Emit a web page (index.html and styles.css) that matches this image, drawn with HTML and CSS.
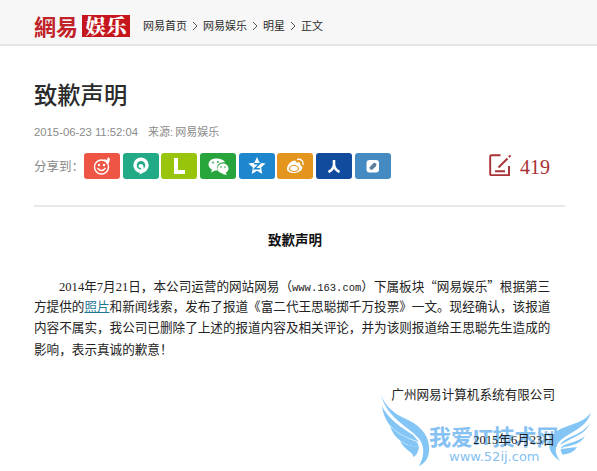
FILE: index.html
```html
<!DOCTYPE html>
<html lang="zh-CN">
<head>
<meta charset="utf-8">
<title>致歉声明</title>
<link rel="stylesheet" href="styles.css">
</head>
<body>
<header class="top">
  <div class="logo"><span class="logo-name">網易</span><span class="logo-channel">娱乐</span></div>
  <nav class="crumbs">
    <span>网易首页</span><svg viewBox="0 0 6 10"><path d="M1 1l4 4-4 4"/></svg><span>网易娱乐</span><svg viewBox="0 0 6 10"><path d="M1 1l4 4-4 4"/></svg><span>明星</span><svg viewBox="0 0 6 10"><path d="M1 1l4 4-4 4"/></svg><span>正文</span>
  </nav>
</header>
<main class="page">
  <h1>致歉声明</h1>
  <div class="meta"><span class="time">2015-06-23 11:52:04</span><span>来源:&thinsp;网易娱乐</span></div>
  <div class="share">
    <span class="share-label">分享到：</span>
    <div class="buttons">
      <a class="btn red"><svg viewBox="0 0 36 26"><circle cx="17.500" cy="14" r="7" class="line"/><circle cx="15" cy="12" r="1.200"/><circle cx="20" cy="12" r="1.200"/><path class="line" d="M13.500 15q4 5 8 0"/><path d="M20 6l3 1 1-3 2 2-1 4-2 1z"/></svg></a>
      <a class="btn teal"><svg viewBox="0 0 36 26"><circle class="ring" cx="18" cy="12.300" r="6"/><path d="M15.500 12.500q2-2.500 4.500-.5 2 4-1 8.500l-3 1q3-3 2-6.500-2.500 0-2.500-2.500z"/></svg></a>
      <a class="btn lime"><svg viewBox="0 0 36 26"><path d="M13 5h4v12h7v4H13z"/></svg></a>
      <a class="btn green"><svg viewBox="0 0 36 26"><path d="M16 5.500c-9 0-9 9-4 11l-1 3 4-2h3c-3-6 3-9 7-8-1-3-5-4-9-4z"/><ellipse cx="23" cy="15.500" rx="5.500" ry="5"/><path d="M25 19l2 3-5-1z"/><g class="green-hole"><circle cx="13" cy="9.500" r=".9"/><circle cx="18" cy="9" r=".9"/><circle cx="21" cy="14" r=".8"/><circle cx="25" cy="14" r=".8"/></g></svg></a>
      <a class="btn blue"><svg viewBox="0 0 36 26"><path d="M18 4l2.600 5.700 6 .7-4.500 4.200 1.200 6.400-5.300-3.200-5.300 3.200 1.200-6.400-4.500-4.200 6-.7z"/><path class="zmark" d="M15 10.700h5.500l-5 5h5.500"/></svg></a>
      <a class="btn orange"><svg viewBox="0 0 36 26"><path d="M10 15c1-5 7-9 9-7 1 1 0 2 0 2 4-2 5 0 4 2 2 1 3 2 2 4-2 5-16 6-15-1z"/><ellipse cx="17" cy="15.500" rx="4.500" ry="3" class="eye"/><circle cx="16.500" cy="16" r="1"/><path class="line" d="M20 6.500c4-1 7 2 6 5.500"/></svg></a>
      <a class="btn navy"><svg viewBox="0 0 36 26"><path class="ren" d="M18 7v5q-1 5-5.500 7M18 12q1 5 5.500 7"/></svg></a>
      <a class="btn steel"><svg viewBox="0 0 36 26"><rect x="11.500" y="7" width="12.500" height="12.500" rx="3"/><path class="pen" d="M16.500 14.800l3-3"/></svg></a>
    </div>
    <a class="comments"><svg viewBox="0 0 22 22"><path d="M11.500 1.200H2.500Q1.200 1.200 1.200 2.500V20q0 1.200 1.300 1.200H20V12"/><path d="M9.500 13.500l9-9M6 17.300h10"/><path class="tip" d="M19.800 3l1.700-1.700"/></svg><span class="count">419</span></a>
  </div>
  <article class="story">
    <h2>致歉声明</h2>
    <div class="lines">
      <p class="first"><i>2014</i>年<i>7</i>月<i>21</i>日，本公司运营的网站网易（<i class="url">www.163.com</i>）下属板块“网易娱乐”根据第三</p>
      <p>方提供的<a class="link">照片</a>和新闻线索，发布了报道《富二代王思聪掷千万投票》一文。现经确认，该报道</p>
      <p>内容不属实，我公司已删除了上述的报道内容及相关评论，并为该则报道给王思聪先生造成的</p>
      <p>影响，表示真诚的歉意！</p>
    </div>
    <footer class="sign">
      <p>广州网易计算机系统有限公司</p>
      <p><i>2015</i>年<i>6</i>月<i>23</i>日</p>
    </footer>
  </article>
</main>
<div class="watermark">
  <svg class="wings" viewBox="0 0 217 76">
    <path d="M1-1C4 10 13 18 24 23C38 29 48 38 49 51C50 61 46 68 39 71C44 62 45 53 40 45C33 34 6 24 1-1Z"/>
    <path d="M2 11C8 24 22 33 33 40L39 47C26 42 5 36 2 11Z"/>
    <path d="M10 31C17 39 27 43 37 47L39 52C25 51 14 44 10 31Z"/>
    <path d="M20 46C26 50 32 51 39 52C38 58 36 61 33 62C34 57 26 57 20 46Z"/>
    <path d="M211 17C208 29 198 34 188 40C176 47 172 54 180 66C169 59 166 49 173 40C183 28 203 31 211 17Z"/>
    <path d="M210 28C206 39 195 41 180 50C185 41 202 41 210 28Z"/>
    <path d="M205 41C200 50 192 50 180 53C187 47 197 48 205 41Z"/>
    <path d="M197 52C193 59 187 58 183 60Q180 56 181 54Z"/>
  </svg>
  <div class="mark-name">我爱IT技术网</div>
  <div class="mark-url">www.52ij.com</div>
</div>
</body>
</html>
```

FILE: styles.css
```css
* { box-sizing: border-box; }
body {
  margin: 0;
  width: 597px;
  height: 471px;
  position: relative;
  overflow: hidden;
  background: #fff;
  color: #2b2b2b;
  font-family: "Liberation Sans", "Noto Sans CJK SC", sans-serif;
}
h1, h2, p { margin: 0; }
i { font-style: normal; }
.top {
  height: 46px;
  padding: 8px 0 0 34px;
  display: flex;
  align-items: center;
  background: #f7f7f7;
  border-bottom: 2px solid #e6e6e6;
}
.logo { display: flex; align-items: center; width: 109px; color: #c02227; }
.logo-name {
  width: 48px;
  height: 23px;
  font: 700 22px/20px "Noto Sans CJK TC", sans-serif;
  white-space: nowrap;
}
.logo-channel {
  width: 48px;
  height: 22px;
  background: #c4161c;
  color: #fff;
  font: 900 20.500px/21px "Noto Serif CJK SC", "Noto Sans CJK SC", serif;
  text-align: center;
  white-space: nowrap;
}
.crumbs { display: flex; align-items: center; font-size: 11px; line-height: 16px; }
.crumbs svg { width: 6px; height: 10px; margin: 0 5px; fill: none; stroke: #555; }
.page { position: relative; z-index: 1; padding: 33px 32px 0 34px; }
h1 { font-size: 23.300px; line-height: 34px; font-weight: 500; }
.meta {
  display: flex;
  gap: 10px;
  margin-top: 11px;
  font-size: 11px;
  line-height: 16px;
  color: #8a8a8a;
}
.time { font-size: 11.300px; }
.share {
  display: flex;
  height: 54px;
  margin-top: 13px;
  border-bottom: 2px solid #e8e8e8;
}
.share-label { width: 50px; font-size: 12.500px; line-height: 29px; color: #888; white-space: nowrap; }
.buttons { display: flex; gap: 2.700px; }
.btn { width: 36px; height: 26px; border-radius: 3px; }
.btn svg { display: block; width: 36px; height: 26px; fill: #fff; }
.btn .line, .btn .ring, .btn .ren { fill: none; stroke: #fff; stroke-width: 1.400; }
.btn .ring { stroke-width: 3.400; }
.btn .ren { stroke-width: 2.600; }
.btn .zmark { fill: none; stroke: #1e86cc; stroke-width: 1.500; }
.btn .eye { fill: none; stroke: #e3951d; stroke-width: 1.200; }
.btn .pen { stroke: #5b7f9c; stroke-width: 3.800; stroke-linecap: round; }
.green-hole { fill: #27a43b; }
.red { background: #ef5545; }
.teal { background: #22a985; }
.lime { background: #98c50c; }
.green { background: #27a43b; }
.blue { background: #1e86cc; }
.orange { background: #e3951d; }
.navy { background: #114b9d; }
.steel { background: #448bc4; }
.comments { display: flex; margin-left: auto; margin-right: 15px; color: #a83236; }
.comments svg { width: 22px; height: 22px; margin-top: 1px; fill: none; stroke: currentColor; stroke-width: 1.900; }
.count { margin-left: 9px; font: 20px/29px "Liberation Serif", serif; }
.story { padding-top: 24px; font-size: 12.600px; color: #222; }
h2 { font-size: 13.500px; line-height: 20px; text-align: center; color: #111; padding-right: 9px; }
.lines { width: 517px; margin-top: 24px; }
.lines p { height: 21.700px; line-height: 21.700px; white-space: nowrap; }
.lines .first { padding-left: 25px; font-family: "Noto Sans CJK SC", sans-serif; }
.story i { font: 12.600px/12px "Liberation Serif", serif; }
.story .url { font: 10.500px/12px "Liberation Mono", monospace; }
.link { color: #1e7795; text-decoration: underline; }
.sign { width: 521px; margin-top: 22px; text-align: right; line-height: 22px; }
.sign p + p { margin-top: 23px; }
.watermark { position: absolute; left: 380px; top: 395px; width: 217px; height: 76px; color: #85c1f2; }
.wings { position: absolute; left: 0; top: 0; width: 217px; height: 76px; overflow: visible; fill: #83c6f6; }
.mark-name {
  position: absolute;
  left: 49px;
  top: 31px;
  font: 700 22px/24px "Liberation Sans", "Noto Sans CJK SC", sans-serif;
  white-space: nowrap;
}
.mark-url { position: absolute; left: 69px; top: 54px; font: 13px/16px "DejaVu Sans", sans-serif; white-space: nowrap; }
```
